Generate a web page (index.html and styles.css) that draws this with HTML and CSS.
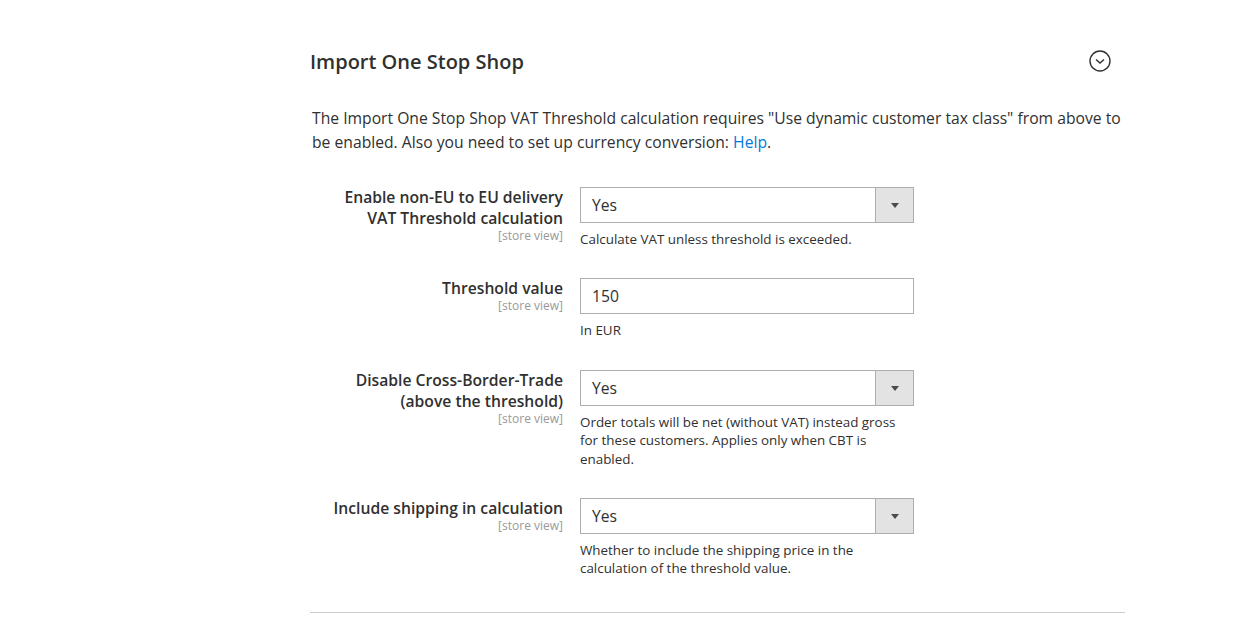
FILE: index.html
```html
<!doctype html>
<html>
    <head>
        <meta charset="utf-8">
        <title>Import One Stop Shop</title>
        <link rel="stylesheet" href="styles.css">
    </head>
    <body>
        <div class="section">
            <div class="section-head">
                <h2>Import One Stop Shop</h2>
                <span class="toggle">
                    <svg width="22" height="22" viewBox="0 0 22 22">
                        <circle cx="11" cy="11" r="10" fill="none" stroke="#303030" stroke-width="1.4"/>
                        <path d="M7 9.5 L11 13 L15 9.5" fill="none" stroke="#303030" stroke-width="1.4"/>
                    </svg>
                </span>
            </div>

            <p class="comment">The Import One Stop Shop VAT Threshold calculation requires "Use dynamic customer tax class" from above to be enabled. Also you need to set up currency conversion: <a href="#">Help</a>.</p>

            <div class="rows">
                <div class="row">
                    <div class="label">
                        <label>Enable non-EU to EU delivery VAT Threshold calculation</label>
                        <span class="scope">[store view]</span>
                    </div>
                    <div class="value">
                        <div class="select"><span>Yes</span><i></i></div>
                        <p class="note">Calculate VAT unless threshold is exceeded.</p>
                    </div>
                </div>

                <div class="row">
                    <div class="label">
                        <label>Threshold value</label>
                        <span class="scope">[store view]</span>
                    </div>
                    <div class="value">
                        <div class="input">150</div>
                        <p class="note">In EUR</p>
                    </div>
                </div>

                <div class="row">
                    <div class="label">
                        <label>Disable Cross-Border-Trade (above the threshold)</label>
                        <span class="scope">[store view]</span>
                    </div>
                    <div class="value">
                        <div class="select"><span>Yes</span><i></i></div>
                        <p class="note">Order totals will be net (without VAT) instead gross for these customers. Applies only when CBT is enabled.</p>
                    </div>
                </div>

                <div class="row">
                    <div class="label">
                        <label>Include shipping in calculation</label>
                        <span class="scope">[store view]</span>
                    </div>
                    <div class="value">
                        <div class="select"><span>Yes</span><i></i></div>
                        <p class="note">Whether to include the shipping price in the calculation of the threshold value.</p>
                    </div>
                </div>
            </div>
        </div>
    </body>
</html>
```

FILE: styles.css
```css
* {
    box-sizing: border-box;
}

body {
    margin: 0;
    background: #fff;
    color: #303030;
    font-family: "Open Sans", sans-serif;
}

.section {
    width: 815px;
    margin-left: 310px;
    padding-top: 39px;
    border-bottom: 1px solid #cccccc;
    padding-bottom: 34px;
}

.section-head {
    display: flex;
    align-items: center;
    justify-content: space-between;
    height: 44px;
    padding-right: 14px;
}

.section-head h2 {
    margin: 0;
    font-size: 20px;
    font-weight: 600;
}

.toggle {
    display: flex;
}

.comment {
    margin: 23px 0 0 2px;
    font-size: 15.7px;
    line-height: 24px;
}

.comment a {
    color: #007bdb;
    text-decoration: none;
}

.rows {
    margin-top: 33px;
}

.row {
    display: grid;
    grid-template-columns: 253px 334px;
    column-gap: 17px;
    margin-bottom: 30px;
}

.row:last-child {
    margin-bottom: 0;
}

.label {
    text-align: right;
    padding-left: 12px;
}

.label label {
    display: block;
    font-size: 15.7px;
    font-weight: 600;
    line-height: 21px;
}

.scope {
    display: block;
    color: #999;
    font-size: 12px;
    line-height: 14px;
}

.select,
.input {
    display: flex;
    align-items: center;
    height: 36px;
    border: 1px solid #adadad;
    font-size: 15.7px;
    padding-left: 11px;
}

.select span {
    flex: 1;
}

.select i {
    align-self: stretch;
    width: 38px;
    background: #e3e3e3;
    border-left: 1px solid #adadad;
    position: relative;
}

.select i:after {
    content: "";
    position: absolute;
    left: 15px;
    top: 15px;
    border-left: 4px solid transparent;
    border-right: 4px solid transparent;
    border-top: 5px solid #514943;
}

.note {
    margin: 7px 0 0;
    font-size: 13.4px;
    line-height: 18.4px;
}
```
